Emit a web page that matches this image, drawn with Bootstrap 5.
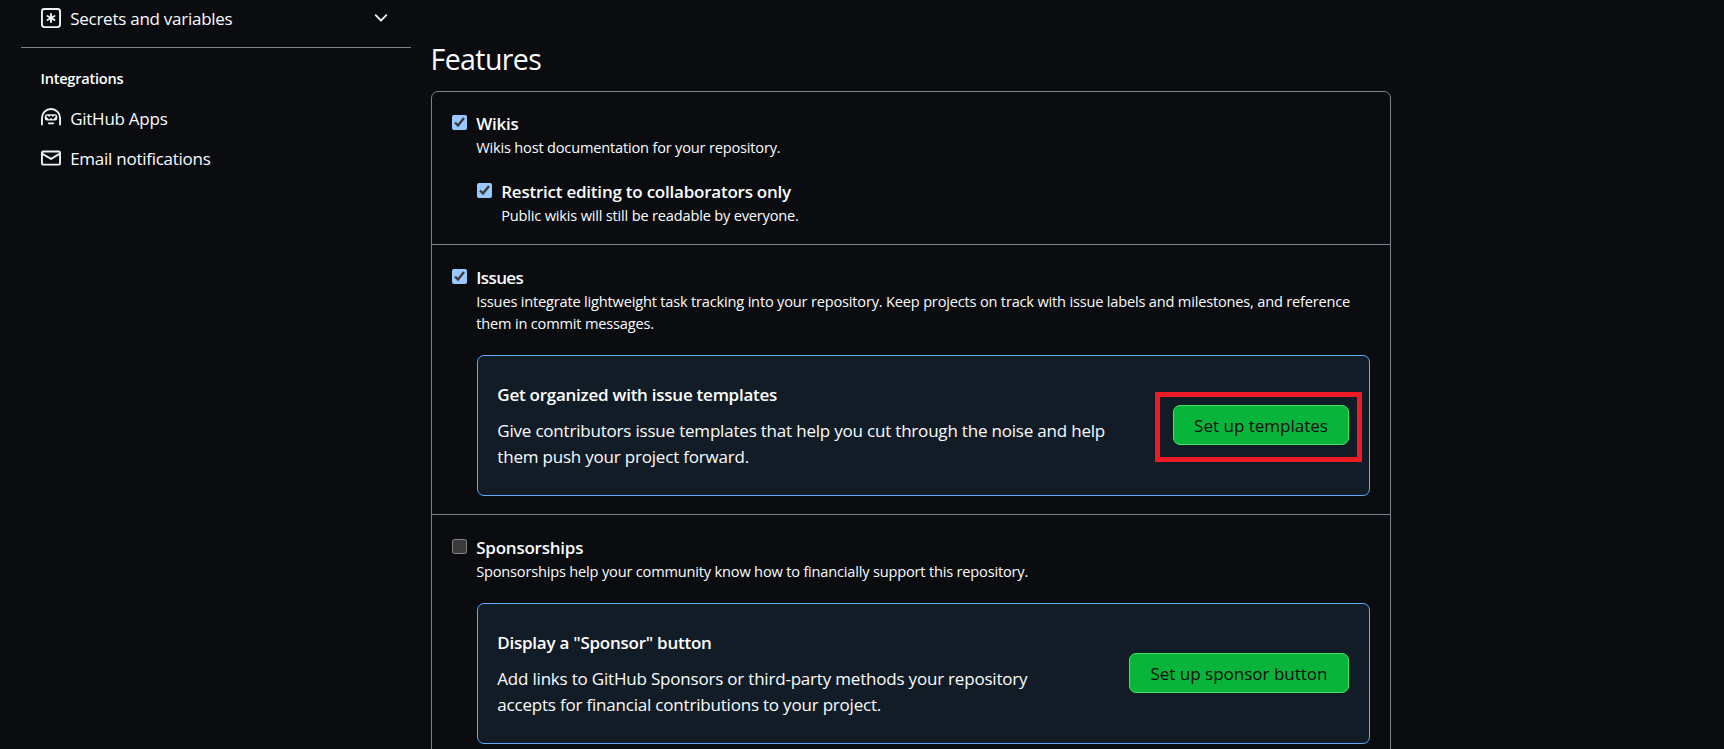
<!DOCTYPE html>
<html lang="en" data-bs-theme="dark">
<head>
<meta charset="utf-8">
<meta name="viewport" content="width=device-width, initial-scale=1">
<title>Repository settings</title>
<link rel="stylesheet" href="https://cdn.jsdelivr.net/npm/bootstrap@5.3.0/dist/css/bootstrap.min.css">
<style>
  :root { color-scheme: dark; }
  body { background: #0a0c10; color: #fafcfe; font: 400 17px/26.25px "Open Sans", "Noto Sans", sans-serif; letter-spacing: -.2px; height: 100vh; overflow: hidden; }
  .layout { padding-left: 21px; gap: 20px; }
  .side { width: 390px; letter-spacing: -.26px; }
  .side-item { height: 40px; padding: 0 20px; gap: 9.2px; color: #fafcfe; text-decoration: none; }
  .side-item:first-child { margin-top: -2px; }
  .side-item span { padding-top: 1.5px; }
  .side-rule { height: 1px; background: #7a828e; margin: 9px 0 19px; }
  .side-title { font-size: 14.6px; line-height: 22px; font-weight: 600; margin: 0 20px 9px 19.5px; }
  .octicon { width: 20px; height: 20px; fill: #f0f3f6; flex: none; }
  .main-col { width: 960px; padding-top: 39px; }
  .page-title { font-size: 28.5px; font-weight: 400; line-height: 40px; letter-spacing: -.58px; margin: 0 0 12px -.5px; color: #fafcfe; }
  .feature-box { border: 1px solid #7a828e; border-radius: 7px; }
  .feature { padding: 21px 20px 18px; }
  .feature:first-child { padding-top: 20px; }
  .feature + .feature { border-top: 1px solid #7a828e; }
  .option { gap: 10px; }
  .option input { width: 15px; height: 15px; margin: 3px 0 0; flex: none; }
  .option label { display: block; font-weight: 600; line-height: 23px; letter-spacing: -.23px; margin-left: -.8px; }
  .option label.tight { letter-spacing: -.6px; }
  .note { font-size: 14.6px; line-height: 22px; letter-spacing: -.19px; margin: 1px 0 0 -.8px; }
  .sub-option { margin-top: 22px; }
  .callout { height: 141px; margin-top: 21px; padding: 0 20px 0 19.3px; background: #121c26; border: 1px solid #5eabfb; border-radius: 7px; }
  .callout h3 { font-size: 17px; font-weight: 600; line-height: 26.25px; letter-spacing: -.25px; margin: 2px 0 9.5px; }
  .btn-setup { --bs-btn-bg: #09b43a; --bs-btn-border-color: #4ae168; --bs-btn-color: #0a0c10; --bs-btn-hover-bg: #09b43a; --bs-btn-hover-color: #0a0c10; --bs-btn-border-radius: 7px; --bs-btn-font-size: 17px; height: 40px; padding: 2px 0 0; line-height: 26px; letter-spacing: 0; }
  .w-templates { width: 176px; }
  .w-sponsor { width: 220px; }
  .btn-wrap { margin-top: -1px; }
  .marker { position: absolute; inset: -13px -13px -17px -18px; border: 5px solid #ed1c24; }
</style>
</head>
<body>
<div class="layout d-flex align-items-start">
  <nav class="side flex-shrink-0">
    <a class="side-item d-flex align-items-center" href="#">
      <svg class="octicon" viewBox="0 0 16 16"><path d="M2.75 0h10.5A2.75 2.75 0 0 1 16 2.75v10.5A2.75 2.75 0 0 1 13.25 16H2.75A2.75 2.75 0 0 1 0 13.25V2.75A2.75 2.75 0 0 1 2.75 0ZM1.5 2.75v10.5c0 .69.56 1.25 1.25 1.25h10.5c.69 0 1.25-.56 1.25-1.25V2.75c0-.69-.56-1.25-1.25-1.25H2.75c-.69 0-1.25.56-1.25 1.25Z"/><path d="M8 4a.75.75 0 0 1 .75.75V6.7l1.69-.975a.75.75 0 0 1 .75 1.3L9.5 8l1.69.976a.75.75 0 0 1-.75 1.298L8.75 9.3v1.951a.75.75 0 0 1-1.5 0V9.299l-1.69.976a.75.75 0 0 1-.75-1.3L6.5 8l-1.69-.975a.75.75 0 0 1 .75-1.3l1.69.976V4.75A.75.75 0 0 1 8 4Z"/></svg>
      <span class="flex-grow-1">Secrets and variables</span>
      <svg class="octicon" viewBox="0 0 16 16"><path d="M12.78 5.22a.749.749 0 0 1 0 1.06l-4.25 4.25a.749.749 0 0 1-1.06 0L3.22 6.28a.749.749 0 1 1 1.06-1.06L8 8.939l3.72-3.719a.749.749 0 0 1 1.06 0Z"/></svg>
    </a>
    <div class="side-rule"></div>
    <h2 class="side-title">Integrations</h2>
    <a class="side-item d-flex align-items-center" href="#">
      <svg class="octicon" viewBox="0 0 16 16"><path d="M0 8a8 8 0 1 1 16 0v5.25a.75.75 0 0 1-1.5 0V8a6.5 6.5 0 1 0-13 0v5.25a.75.75 0 0 1-1.5 0Zm5.5 4.25a.75.75 0 0 1 .75-.75h3.5a.75.75 0 0 1 0 1.5h-3.5a.75.75 0 0 1-.75-.75Z"/><path fill-rule="evenodd" d="M3 6.75C3 5.784 3.784 5 4.75 5h6.5c.966 0 1.75.784 1.75 1.75v1.5A1.75 1.75 0 0 1 11.25 10h-6.5A1.75 1.75 0 0 1 3 8.25Zm1.47-.53a.75.75 0 0 1 1.06 0l.97.97.97-.97a.748.748 0 0 1 1.06 0l.97.97.97-.97a.749.749 0 1 1 1.06 1.06l-1.5 1.5a.748.748 0 0 1-1.06 0L8 7.81l-.97.97a.748.748 0 0 1-1.06 0l-1.5-1.5a.749.749 0 0 1 0-1.06Z"/></svg>
      <span>GitHub Apps</span>
    </a>
    <a class="side-item d-flex align-items-center" href="#">
      <svg class="octicon" viewBox="0 0 16 16"><path d="M1.75 2h12.5c.966 0 1.75.784 1.75 1.75v8.5A1.75 1.75 0 0 1 14.25 14H1.75A1.75 1.75 0 0 1 0 12.25v-8.5C0 2.784.784 2 1.75 2ZM1.5 12.251c0 .138.112.25.25.25h12.5a.25.25 0 0 0 .25-.25V5.809L8.38 9.397a.75.75 0 0 1-.76 0L1.5 5.809v6.442Zm13-8.181v-.32a.25.25 0 0 0-.25-.25H1.75a.25.25 0 0 0-.25.25v.32L8 7.88Z"/></svg>
      <span>Email notifications</span>
    </a>
  </nav>

  <main class="main-col flex-shrink-0">
    <h1 class="page-title">Features</h1>
    <div class="feature-box">
      <section class="feature">
        <div class="option d-flex align-items-start">
          <input type="checkbox" id="wikis" checked>
          <div>
            <label for="wikis">Wikis</label>
            <p class="note">Wikis host documentation for your repository.</p>
            <div class="option sub-option d-flex align-items-start">
              <input type="checkbox" id="restrict" checked>
              <div>
                <label for="restrict">Restrict editing to collaborators only</label>
                <p class="note">Public wikis will still be readable by everyone.</p>
              </div>
            </div>
          </div>
        </div>
      </section>

      <section class="feature">
        <div class="option d-flex align-items-start">
          <input type="checkbox" id="issues" checked>
          <div class="flex-grow-1">
            <label class="tight" for="issues">Issues</label>
            <p class="note">Issues integrate lightweight task tracking into your repository. Keep projects on track with issue labels and milestones, and reference<br>them in commit messages.</p>
            <div class="callout d-flex align-items-center justify-content-between">
              <div>
                <h3>Get organized with issue templates</h3>
                <p class="m-0">Give contributors issue templates that help you cut through the noise and help<br>them push your project forward.</p>
              </div>
              <div class="btn-wrap position-relative">
                <button class="btn btn-setup w-templates d-flex align-items-center justify-content-center" type="button">Set up templates</button>
                <div class="marker"></div>
              </div>
            </div>
          </div>
        </div>
      </section>

      <section class="feature">
        <div class="option d-flex align-items-start">
          <input type="checkbox" id="sponsorships">
          <div class="flex-grow-1">
            <label for="sponsorships">Sponsorships</label>
            <p class="note">Sponsorships help your community know how to financially support this repository.</p>
            <div class="callout d-flex align-items-center justify-content-between">
              <div>
                <h3>Display a "Sponsor" button</h3>
                <p class="m-0">Add links to GitHub Sponsors or third-party methods your repository<br>accepts for financial contributions to your project.</p>
              </div>
              <div class="btn-wrap">
                <button class="btn btn-setup w-sponsor d-flex align-items-center justify-content-center" type="button">Set up sponsor button</button>
              </div>
            </div>
          </div>
        </div>
      </section>
    </div>
  </main>
</div>
<script src="https://cdn.jsdelivr.net/npm/bootstrap@5.3.0/dist/js/bootstrap.bundle.min.js"></script>
</body>
</html>
